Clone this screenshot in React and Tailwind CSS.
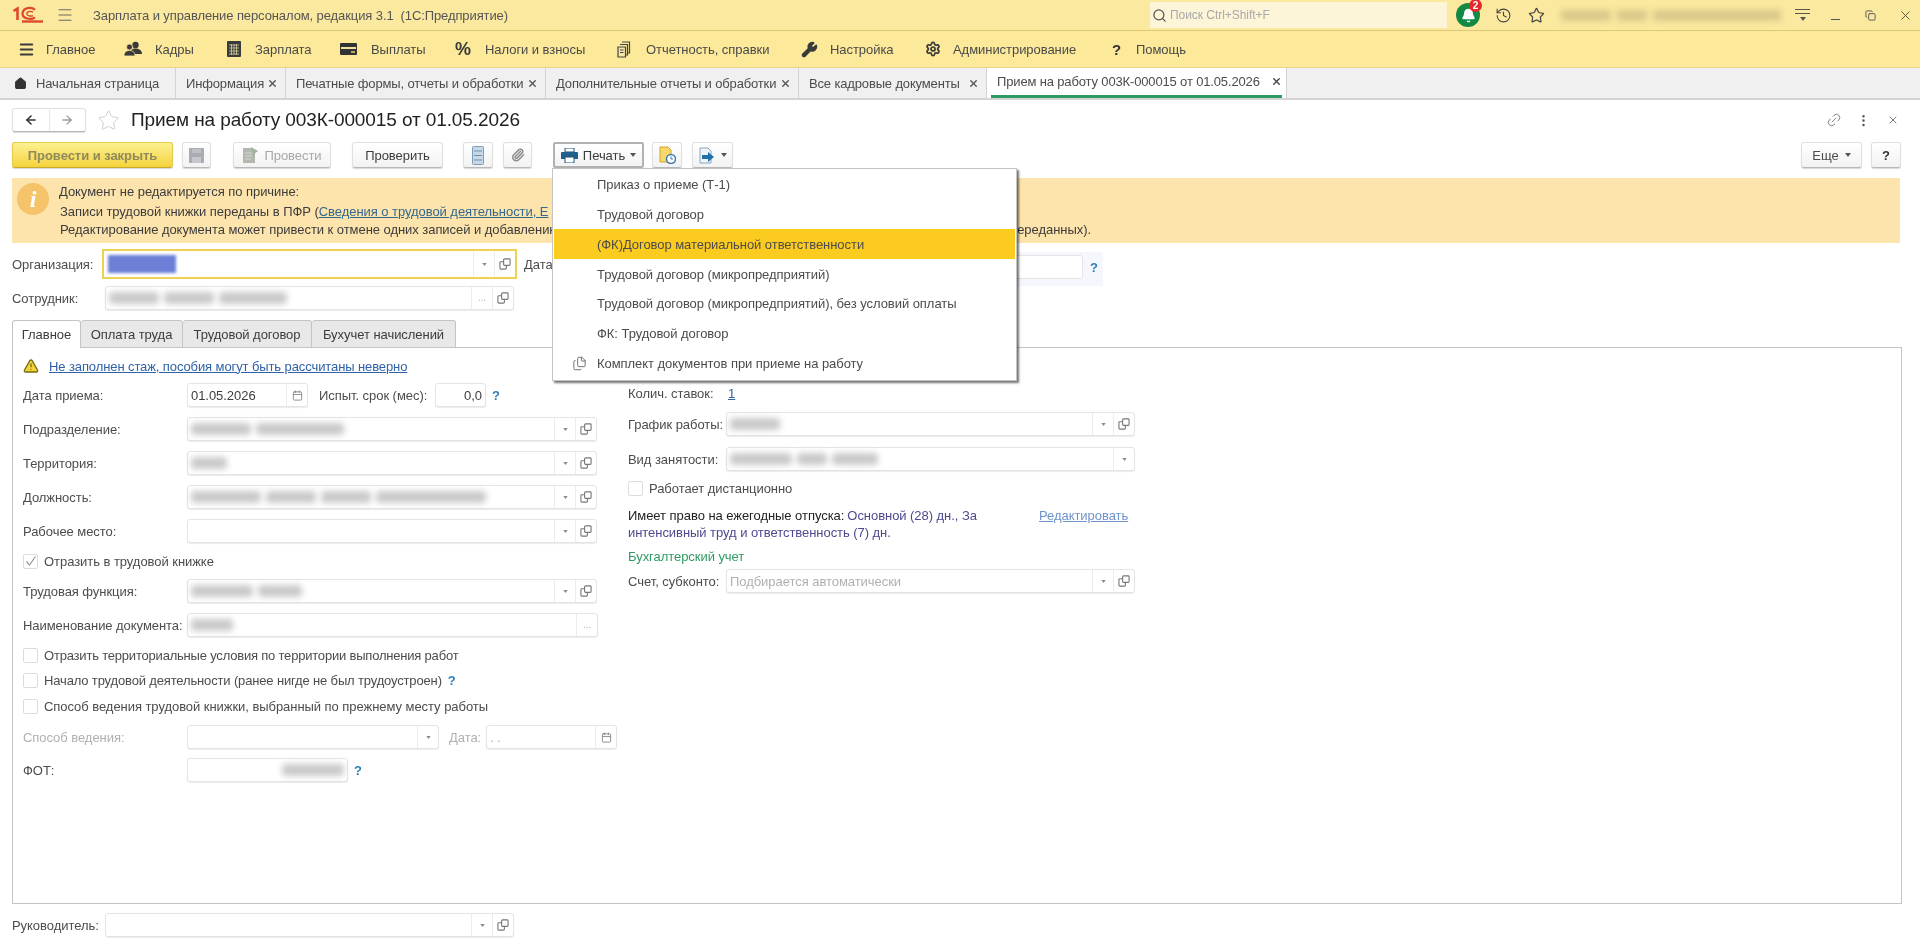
import {
  ArrowLeft,
  ArrowRight,
  Bell,
  Calendar,
  Copy,
  Files,
  History,
  House,
  Link2,
  Menu,
  MoreVertical,
  Paperclip,
  Search,
  Settings,
  Star,
  TriangleAlert,
  Wrench,
  X,
} from "lucide-react";

const tabs = [
  { name: "Информация", width: "w-[110px]" },
  { name: "Печатные формы, отчеты и обработки", width: "w-[260px]" },
  { name: "Дополнительные отчеты и обработки", width: "w-[253px]" },
  { name: "Все кадровые документы", width: "w-[188px]" },
];

const printItems = [
  "Приказ о приеме (Т-1)",
  "Трудовой договор",
  "(ФК)Договор материальной ответственности",
  "Трудовой договор (микропредприятий)",
  "Трудовой договор (микропредприятий), без условий оплаты",
  "ФК: Трудовой договор",
  "Комплект документов при приеме на работу",
];

function Logo() {
  return (
    <svg width="32" height="18" viewBox="0 0 32 18" fill="none" stroke="#dd4a2c" strokeWidth="2.2">
      <path d="M1.5 5 L5.5 2.5 V14" strokeWidth="2.6" />
      <path d="M23 3.8 C20 1 11 1 10.5 7.5 C10.5 13 19 14 23 11.5" />
      <path d="M21 6.2 C19 5 15 5 14.8 7.8 C15 10 19 10.5 21 9.6" strokeWidth="1.4" />
      <path d="M10 15.5 H31" strokeWidth="2.4" />
    </svg>
  );
}

function PeopleIcon() {
  return (
    <svg width="18" height="16" viewBox="0 0 18 16" fill="#3a3a3a">
      <circle cx="11.5" cy="4" r="3.2" />
      <path d="M6 13 C6 9 8.5 7.5 11.5 7.5 C14.5 7.5 18 9 18 13 Z" />
      <circle cx="5.5" cy="6" r="3" stroke="#fce99a" strokeWidth="0.8" />
      <path d="M0 15 C0 11 2.5 9.5 5.5 9.5 C8.5 9.5 11 11 11 15 Z" stroke="#fce99a" strokeWidth="0.8" />
    </svg>
  );
}

function GridIcon() {
  return (
    <svg width="14" height="16" viewBox="0 0 14 16">
      <rect width="14" height="16" rx="1" fill="#3a3a3a" />
      <path d="M2 4 H12 M2 7 H12 M2 10 H12 M2 13 H12 M4.5 3 V14 M7 3 V14 M9.5 3 V14" stroke="#d8cfa0" strokeWidth="0.8" />
    </svg>
  );
}

function WalletIcon() {
  return (
    <svg width="17" height="12" viewBox="0 0 17 12">
      <rect width="17" height="12" rx="1" fill="#333" />
      <rect x="1" y="4" width="15" height="2" fill="#f0e2a0" />
      <rect x="11" y="8" width="4" height="2" fill="#b8a95f" />
    </svg>
  );
}

function FilesIcon() {
  return (
    <svg width="14" height="17" viewBox="0 0 14 17" fill="none" stroke="#444" strokeWidth="1.2">
      <path d="M5 1 H12.5 V12 H10.5" />
      <path d="M3 3.5 H10.5 V14 H8.5" />
      <path d="M1 6 H8.5 V16 H1 Z" fill="#f4e6a8" />
      <path d="M3 9 H6.5 M3 11.5 H6.5" />
    </svg>
  );
}

function SaveIcon() {
  return (
    <svg width="15" height="15" viewBox="0 0 15 15">
      <rect width="15" height="15" rx="1" fill="#a9adb3" />
      <rect x="3" y="9" width="9" height="6" fill="#c4c7cb" />
      <rect x="3" y="1" width="9" height="4" fill="#bcbfc4" />
    </svg>
  );
}

function PostIcon() {
  return (
    <svg width="17" height="18" viewBox="0 0 17 18">
      <path d="M1 2 H10 L13 5 V17 H1 Z" fill="#b3b8ad" />
      <path d="M3 7 H10 M3 10 H10 M3 13 H9" stroke="#d4d7d0" strokeWidth="1" />
      <path d="M9 1 L16 5 L11 9 Z" fill="#9db59f" />
    </svg>
  );
}

function LinesIcon() {
  return (
    <svg width="12" height="19" viewBox="0 0 12 19">
      <rect x="0.5" y="0.5" width="11" height="18" rx="1" fill="#c9d8e6" stroke="#7d9cb8" />
      <path d="M2 5 H10 M2 9.5 H10 M2 14 H10" stroke="#6f90ae" strokeWidth="1.2" />
    </svg>
  );
}

function PrinterIcon() {
  return (
    <svg width="17" height="15" viewBox="0 0 17 15">
      <rect x="4" y="0" width="9" height="4" fill="#fff" stroke="#1f5378" />
      <path d="M1 4 H16 A1 1 0 0 1 17 5 V11 H0 V5 A1 1 0 0 1 1 4 Z" fill="#1f5f8b" />
      <rect x="4" y="9" width="9" height="6" fill="#fff" stroke="#1f5378" />
    </svg>
  );
}

function DocClockIcon() {
  return (
    <svg width="17" height="18" viewBox="0 0 17 18">
      <path d="M1 1 H9 L12 4 V16 H1 Z" fill="#f6d96a" stroke="#d3a52d" />
      <circle cx="12" cy="13" r="4.5" fill="#fff" stroke="#3a77b0" strokeWidth="1.5" />
      <path d="M12 10.5 V13 H14" stroke="#3a77b0" fill="none" />
    </svg>
  );
}

function DocArrowIcon() {
  return (
    <svg width="17" height="17" viewBox="0 0 17 17">
      <path d="M1 1 H9 L12 4 V16 H1 Z" fill="#eef3f8" stroke="#8ca7c0" />
      <path d="M3 8 H9 V5 L15 10 L9 15 V12 H3 Z" fill="#1f6fa8" />
    </svg>
  );
}

function Caret({ light }) {
  return (
    <svg width={light ? 5 : 6} height={light ? 3 : 4} viewBox="0 0 6 4" className="shrink-0">
      <path d="M0 0 H6 L3 4 Z" fill={light ? "#8c8c8c" : "#555"} />
    </svg>
  );
}

function OpenIcon() {
  return (
    <svg width="12" height="12" viewBox="0 0 13 13" fill="none" stroke="#777" strokeWidth="1.2">
      <rect x="5" y="1" width="7" height="7" rx="1" />
      <path d="M5 4 H2 a1 1 0 0 0 -1 1 V11 a1 1 0 0 0 1 1 H7 a1 1 0 0 0 1 -1 V8" />
    </svg>
  );
}

function Btn({ className = "", children }) {
  return (
    <div
      className={`flex h-[26px] shrink-0 items-center justify-center rounded-[3px] border border-[#e0e0e0] border-b-[#b8b8b8] bg-gradient-to-b from-white to-[#f2f2f2] shadow-[0_1px_1px_rgba(0,0,0,0.16)] ${className}`}
    >
      {children}
    </div>
  );
}

// Размытые данные: каждое слово отдельным пятном
function Blurred({ words = [], className = "" }) {
  return (
    <div className={`flex gap-[5px] ${className}`}>
      {words.map((w, i) => (
        <div key={i} className={`h-[12px] rounded-sm bg-[#c9c9c9] blur-[3px] ${w}`} />
      ))}
    </div>
  );
}

function Field({ className = "", blur, text, muted, align, buttons = ["drop", "open"] }) {
  return (
    <div
      className={`flex h-[24px] shrink-0 rounded-[3px] border border-[#e4e4e4] bg-white shadow-[0_1px_1px_rgba(0,0,0,0.08)] ${className}`}
    >
      <div className={`flex min-w-0 flex-1 items-center px-[3px] ${align === "right" ? "justify-end" : ""}`}>
        {blur && <Blurred words={blur} />}
        {text && <span className={muted ? "text-[#b0b0b0]" : "text-[#3c3c3c]"}>{text}</span>}
      </div>
      {buttons.map((kind) => (
        <div key={kind} className="flex w-[21px] shrink-0 items-center justify-center border-l border-[#ececec]">
          {kind === "drop" && <Caret light />}
          {kind === "open" && <OpenIcon />}
          {kind === "dots" && <span className="text-[10px] leading-none text-[#b8b8b8]">...</span>}
          {kind === "date" && <Calendar size={11} color="#888" />}
        </div>
      ))}
    </div>
  );
}

function Row({ label, className = "", muted, children }) {
  return (
    <div className={`flex h-[24px] items-center ${className}`}>
      <span className={`w-[164px] shrink-0 whitespace-nowrap ${muted ? "text-[#b0b0b0]" : ""}`}>{label}</span>
      {children}
    </div>
  );
}

function Check({ label, checked, children, className = "", textClass = "" }) {
  return (
    <div className={`flex items-center ${className}`}>
      <div className="mr-[6px] flex h-[15px] w-[15px] shrink-0 items-center justify-center rounded-[2px] border border-[#dcdcdc] bg-white">
        {checked && (
          <svg width="13" height="13" viewBox="0 0 13 13" fill="none" stroke="#999" strokeWidth="1.2">
            <path d="M2.5 6.5 L5.5 10 L11.5 1.5" />
          </svg>
        )}
      </div>
      <span className={`whitespace-nowrap ${textClass}`}>{label}</span>
      {children}
    </div>
  );
}

function Hint({ className = "" }) {
  return <span className={`font-bold text-[#2f7fb5] ${className}`}>?</span>;
}

export default function App() {
  return (
    <div className="relative flex h-[949px] w-[1920px] flex-col overflow-hidden bg-white font-['Liberation_Sans',Arial,sans-serif] text-[13px] leading-[17px] tracking-[-0.05px] text-[#4c4c4c] blur-[0.4px]">
      {/* Заголовок окна */}
      <div className="flex h-[31px] shrink-0 items-center border-b border-[#dcc878] bg-[#fbe99f]">
        <div className="ml-[12px] flex w-[44px]">
          <Logo />
        </div>
        <Menu size={18} strokeWidth={1.3} color="#666" />
        <span className="ml-[19px] whitespace-pre tracking-[-0.1px] text-[#555]">Зарплата и управление персоналом, редакция 3.1  (1С:Предприятие)</span>
        <div className="ml-auto mr-[9px] flex h-[26px] w-[297px] items-center bg-[#fdf5d8] pl-[2px]">
          <Search size={15} color="#555" strokeWidth={2} />
          <span className="ml-[3px] text-[12px] text-[#a9a9a9]">Поиск Ctrl+Shift+F</span>
        </div>
        <div className="relative flex h-[24px] w-[24px] items-center justify-center rounded-full bg-[#138a43]">
          <Bell size={15} color="#fff" fill="#fff" />
          <span className="absolute -top-[4px] -right-[2px] flex h-[13px] w-[13px] items-center justify-center rounded-full bg-[#e8262d] text-[10px] font-bold leading-none text-white">2</span>
        </div>
        <History size={17} strokeWidth={1.5} color="#444" className="ml-[15px]" />
        <Star size={17} strokeWidth={1.7} color="#444" className="ml-[16px]" />
        <div className="ml-[16px] flex w-[220px] gap-[6px]">
          <div className="h-[11px] w-[50px] bg-[#d8c98a] blur-[3px]" />
          <div className="h-[11px] w-[30px] bg-[#d8c98a] blur-[3px]" />
          <div className="h-[11px] w-[128px] bg-[#d8c98a] blur-[3px]" />
        </div>
        <div className="ml-[13px] flex w-[17px] flex-col items-center gap-[3px]">
          <div className="h-px w-[15px] bg-[#555]" />
          <div className="h-px w-[15px] bg-[#555]" />
          <Caret />
        </div>
        <div className="ml-[20px] mt-[8px] h-px w-[9px] bg-[#555]" />
        <Copy size={11} color="#555" className="ml-[25px]" />
        <X size={15} strokeWidth={1.4} color="#444" className="ml-[22px]" />
        <div className="w-[7px]" />
      </div>

      {/* Разделы */}
      <div className="flex h-[37px] shrink-0 items-center border-b border-[#e5d48e] bg-[#fce99a] pl-[18px] text-[#4a4a4a]">
        <div className="flex w-[106px] items-center">
          <Menu size={17} strokeWidth={3} color="#3a3a3a" className="mr-[11px]" />
          Главное
        </div>
        <div className="flex w-[103px] items-center">
          <div className="flex w-[31px]"><PeopleIcon /></div>
          Кадры
        </div>
        <div className="flex w-[113px] items-center">
          <div className="flex w-[28px]"><GridIcon /></div>
          Зарплата
        </div>
        <div className="flex w-[115px] items-center">
          <div className="flex w-[31px]"><WalletIcon /></div>
          Выплаты
        </div>
        <div className="flex w-[162px] items-center whitespace-nowrap">
          <span className="w-[30px] text-[18px] font-bold text-[#3a3a3a]">%</span>
          Налоги и взносы
        </div>
        <div className="flex w-[184px] items-center whitespace-nowrap">
          <div className="flex w-[29px]"><FilesIcon /></div>
          Отчетность, справки
        </div>
        <div className="flex w-[124px] items-center">
          <Wrench size={17} color="#3a3a3a" fill="#3a3a3a" className="mr-[12px]" />
          Настройка
        </div>
        <div className="flex w-[185px] items-center">
          <Settings size={16} strokeWidth={2.6} color="#3a3a3a" className="mr-[12px]" />
          Администрирование
        </div>
        <div className="flex items-center">
          <span className="w-[26px] pl-[2px] text-[15px] font-bold text-[#333]">?</span>
          Помощь
        </div>
      </div>

      {/* Открытые вкладки */}
      <div className="flex h-[32px] shrink-0 items-stretch border-b-2 border-[#d4d4d4] bg-[#f0f0f0] tracking-[-0.15px]">
        <div className="flex w-[176px] items-center border-r border-[#d4d4d4] pl-[14px]">
          <House size={13} color="#333" fill="#333" />
          <span className="ml-[9px]">Начальная страница</span>
        </div>
        {tabs.map((tab) => (
          <div key={tab.name} className={`flex items-center justify-between border-r border-[#d4d4d4] pl-[10px] pr-[7px] ${tab.width}`}>
            <span className="whitespace-nowrap">{tab.name}</span>
            <X size={11} strokeWidth={3} color="#555" />
          </div>
        ))}
        <div className="flex w-[300px] items-stretch border-r border-[#d4d4d4] bg-white px-[4px]">
          <div className="flex flex-1 items-center justify-between border-b-[3px] border-[#2e9b63] pl-[6px]">
            <span className="whitespace-nowrap">Прием на работу 003К-000015 от 01.05.2026</span>
            <X size={11} strokeWidth={3} color="#444" />
          </div>
        </div>
      </div>

      {/* Шапка документа */}
      <div className="mt-[8px] flex h-[24px] shrink-0 items-center pl-[12px] pr-[19px]">
        <div className="flex h-[24px] w-[74px] rounded-[3px] border border-[#e0e0e0] border-b-[#b8b8b8] shadow-[0_1px_1px_rgba(0,0,0,0.15)]">
          <div className="flex flex-1 items-center justify-center border-r border-[#e8e8e8]">
            <ArrowLeft size={14} strokeWidth={2.6} color="#333" />
          </div>
          <div className="flex flex-1 items-center justify-center">
            <ArrowRight size={14} strokeWidth={2.2} color="#999" />
          </div>
        </div>
        <Star size={23} strokeWidth={1} color="#cccccc" className="ml-[11px]" />
        <span className="ml-[11px] -mt-[2px] whitespace-nowrap text-[19px] tracking-[-0.1px] text-[#222]">Прием на работу 003К-000015 от 01.05.2026</span>
        <Link2 size={16} strokeWidth={1.3} color="#777" className="ml-auto -rotate-45" />
        <MoreVertical size={15} color="#555" className="ml-[14px]" />
        <X size={12} color="#777" className="ml-[16px] mr-[2px]" />
      </div>

      {/* Командная панель */}
      <div className="mt-[10px] flex h-[26px] shrink-0 items-center pl-[12px] pr-[19px]">
        <div className="flex h-[26px] w-[161px] shrink-0 items-center justify-center rounded-[3px] border border-[#e4cb4a] border-b-[#c9ab2a] bg-gradient-to-b from-[#fdf08e] to-[#f4d338] font-bold text-[#8f8a5c] shadow-[0_1px_1px_rgba(0,0,0,0.16)]">
          Провести и закрыть
        </div>
        <Btn className="ml-[9px] w-[29px]">
          <SaveIcon />
        </Btn>
        <Btn className="ml-[22px] w-[98px] text-[#a8a8a8]">
          <PostIcon />
          <span className="ml-[5px]">Провести</span>
        </Btn>
        <Btn className="ml-[21px] w-[91px] text-[#3c3c3c]">Проверить</Btn>
        <Btn className="ml-[20px] w-[30px]">
          <LinesIcon />
        </Btn>
        <Btn className="ml-[10px] w-[29px]">
          <Paperclip size={14} strokeWidth={2.6} color="#8e8e8e" />
        </Btn>
        <div className="ml-[21px] flex h-[26px] w-[91px] items-center justify-center gap-[5px] rounded-[2px] border-2 border-[#b2b2b2] bg-gradient-to-b from-white to-[#f2f2f2] text-[#3c3c3c]">
          <PrinterIcon />
          Печать
          <Caret />
        </div>
        <Btn className="ml-[8px] w-[30px]">
          <DocClockIcon />
        </Btn>
        <Btn className="ml-[10px] w-[41px] gap-[5px]">
          <DocArrowIcon />
          <Caret />
        </Btn>
        <Btn className="ml-auto w-[61px] gap-[6px]">
          Еще
          <Caret />
        </Btn>
        <Btn className="ml-[9px] w-[30px] font-bold text-[#333]">?</Btn>
      </div>

      {/* Причина запрета редактирования */}
      <div className="ml-[12px] mt-[10px] flex h-[65px] w-[1888px] shrink-0 bg-[#fde4ac]">
        <div className="ml-[5px] mt-[5px] flex h-[32px] w-[32px] items-center justify-center rounded-full bg-[#f5c36a] font-['Liberation_Serif',serif] text-[24px] font-bold italic text-white">i</div>
        <div className="ml-[10px] mt-[5px] flex flex-col text-[#3c3c3c]">
          <span className="leading-[18px]">Документ не редактируется по причине:</span>
          <span className="ml-[1px] mt-[2px] whitespace-nowrap leading-[18px]">
            Записи трудовой книжки переданы в ПФР (
            <span className="text-[#34688f] underline">Сведения о трудовой деятельности, Е</span>
          </span>
          <div className="ml-[1px] flex w-[1031px] justify-between whitespace-nowrap">
            <span>Редактирование документа может привести к отмене одних записей и добавлению</span>
            <span>переданных).</span>
          </div>
        </div>
      </div>

      {/* Организация */}
      <div className="ml-[12px] mt-[6px] flex h-[30px] shrink-0 items-start">
        <span className="w-[90px] self-center">Организация:</span>
        <div className="flex h-[30px] w-[415px] border-2 border-[#f0d050] bg-white">
          <div className="flex flex-1 items-center pl-[4px]">
            <div className="h-[18px] w-[68px] bg-[#6b7fd7] blur-[1.5px]" />
          </div>
          <div className="flex w-[21px] items-center justify-center border-l border-[#ececec]">
            <Caret light />
          </div>
          <div className="flex w-[21px] items-center justify-center border-l border-[#ececec]">
            <OpenIcon />
          </div>
        </div>
        <span className="ml-[7px] w-[40px] self-center">Дата:</span>
        <div className="mt-[3px] flex h-[34px] w-[539px] items-start bg-[#f5f7fd] pl-[319px]">
          <div className="mt-[3px] h-[24px] w-[200px] shrink-0 rounded-[3px] border border-[#e4e4e4] bg-white" />
          <Hint className="ml-[7px] mt-[7px]" />
        </div>
      </div>

      {/* Сотрудник */}
      <div className="ml-[12px] mt-[7px] flex h-[24px] shrink-0 items-center">
        <span className="w-[93px]">Сотрудник:</span>
        <Field className="w-[409px]" blur={["w-[50px]", "w-[50px]", "w-[68px]"]} buttons={["dots", "open"]} />
      </div>

      {/* Вкладки формы */}
      <div className="relative z-10 ml-[12px] mt-[10px] -mb-px flex h-[28px] shrink-0 items-stretch text-[#3c3c3c]">
        <div className="flex w-[69px] items-center justify-center rounded-t-[3px] border border-b-0 border-[#c4c4c4] bg-white">Главное</div>
        <div className="flex w-[102px] items-center justify-center rounded-t-[3px] border border-l-0 border-[#c4c4c4] bg-[#e8e8e8]">Оплата труда</div>
        <div className="flex w-[129px] items-center justify-center rounded-t-[3px] border border-l-0 border-[#c4c4c4] bg-[#e8e8e8]">Трудовой договор</div>
        <div className="flex w-[144px] items-center justify-center rounded-t-[3px] border border-l-0 border-[#c4c4c4] bg-[#e8e8e8]">Бухучет начислений</div>
      </div>

      <div className="ml-[12px] flex h-[557px] w-[1890px] shrink-0 border border-[#c4c4c4] pl-[10px]">
        {/* Левая колонка */}
        <div className="w-[605px] shrink-0">
          <div className="mt-[8px] flex h-[20px] items-center tracking-[-0.1px]">
            <TriangleAlert size={16} color="#7a6a10" fill="#f3d33c" />
            <span className="ml-[10px] text-[#2f62a8] underline">Не заполнен стаж, пособия могут быть рассчитаны неверно</span>
          </div>
          <Row label="Дата приема:" className="mt-[7px]">
            <Field className="w-[121px]" text="01.05.2026" buttons={["date"]} />
            <span className="ml-[11px] w-[116px] whitespace-nowrap">Испыт. срок (мес):</span>
            <Field className="w-[51px]" text="0,0" align="right" buttons={[]} />
            <Hint className="ml-[6px]" />
          </Row>
          <Row label="Подразделение:" className="mt-[10px]">
            <Field className="w-[410px]" blur={["w-[60px]", "w-[88px]"]} />
          </Row>
          <Row label="Территория:" className="mt-[10px]">
            <Field className="w-[410px]" blur={["w-[36px]"]} />
          </Row>
          <Row label="Должность:" className="mt-[10px]">
            <Field className="w-[410px]" blur={["w-[70px]", "w-[50px]", "w-[50px]", "w-[110px]"]} />
          </Row>
          <Row label="Рабочее место:" className="mt-[10px]">
            <Field className="w-[410px]" />
          </Row>
          <Check label="Отразить в трудовой книжке" checked className="mt-[6px] h-[24px]" />
          <Row label="Трудовая функция:" className="mt-[6px]">
            <Field className="w-[410px]" blur={["w-[62px]", "w-[44px]"]} />
          </Row>
          <Row label="Наименование документа:" className="mt-[10px]">
            <Field className="w-[411px]" blur={["w-[42px]"]} buttons={["dots"]} />
          </Row>
          <Check label="Отразить территориальные условия по территории выполнения работ" className="mt-[6px] h-[25px]" textClass="tracking-[-0.2px]" />
          <Check label="Начало трудовой деятельности (ранее нигде не был трудоустроен)" className="h-[25px]" textClass="tracking-[-0.15px]">
            <Hint className="ml-[6px]" />
          </Check>
          <Check label="Способ ведения трудовой книжки, выбранный по прежнему месту работы" className="h-[26px]" />
          <Row label="Способ ведения:" muted className="mt-[6px]">
            <Field className="w-[252px]" buttons={["drop"]} />
            <span className="ml-[10px] w-[37px] text-[#b0b0b0]">Дата:</span>
            <Field className="w-[131px]" text="   .  ." muted buttons={["date"]} />
          </Row>
          <Row label="ФОТ:" className="mt-[9px]">
            <Field className="w-[161px]" align="right" blur={["w-[62px]"]} buttons={[]} />
            <Hint className="ml-[6px]" />
          </Row>
        </div>

        {/* Правая колонка */}
        <div className="w-[508px] shrink-0">
          <div className="mt-[33px] flex h-[24px] items-center">
            <span className="w-[98px]">Колич. ставок:</span>
            <span className="ml-[2px] text-[#2f62a8] underline">1</span>
          </div>
          <div className="mt-[7px] flex h-[24px] items-center">
            <span className="w-[98px] whitespace-nowrap">График работы:</span>
            <Field className="w-[409px]" blur={["w-[50px]"]} />
          </div>
          <div className="mt-[11px] flex h-[24px] items-center">
            <span className="w-[98px] whitespace-nowrap">Вид занятости:</span>
            <Field className="w-[409px]" blur={["w-[62px]", "w-[30px]", "w-[46px]"]} buttons={["drop"]} />
          </div>
          <Check label="Работает дистанционно" className="mt-[5px] h-[24px]" />
          <div className="mt-[7px] flex">
            <div className="w-[390px] text-[#4c4a8e]">
              <div className="flex gap-[3px] whitespace-nowrap">
                <span className="text-[#222]">Имеет право на ежегодные отпуска:</span>
                <span>Основной (28) дн., За</span>
              </div>
              <div>интенсивный труд и ответственность (7) дн.</div>
            </div>
            <span className="ml-[21px] text-[#6f93cc] underline">Редактировать</span>
          </div>
          <div className="mt-[7px] text-[#2e9b63]">Бухгалтерский учет</div>
          <div className="mt-[4px] flex h-[24px] items-center">
            <span className="w-[98px] whitespace-nowrap">Счет, субконто:</span>
            <Field className="w-[409px]" text="Подбирается автоматически" muted />
          </div>
        </div>
      </div>

      {/* Руководитель */}
      <div className="ml-[12px] mt-[9px] flex h-[24px] shrink-0 items-center">
        <span className="w-[93px]">Руководитель:</span>
        <Field className="w-[409px]" />
      </div>

      {/* Меню печати */}
      <div className="absolute left-[552px] top-[168px] z-20 flex h-[213px] w-[465px] flex-col border border-[#c4c4c4] bg-white pb-[2px] pt-[1px] shadow-[2px_2px_2px_rgba(0,0,0,0.55)]">
        {printItems.map((name, i) => (
          <div key={name} className={`mx-[1px] flex h-[30px] items-center whitespace-nowrap text-[#4c4c4c] ${i === 2 ? "bg-[#fbcb20]" : ""}`}>
            <div className="flex w-[43px] justify-end pr-[10px]">
              {i === 6 && <Files size={15} strokeWidth={1.3} color="#555" />}
            </div>
            {name}
          </div>
        ))}
      </div>
    </div>
  );
}
